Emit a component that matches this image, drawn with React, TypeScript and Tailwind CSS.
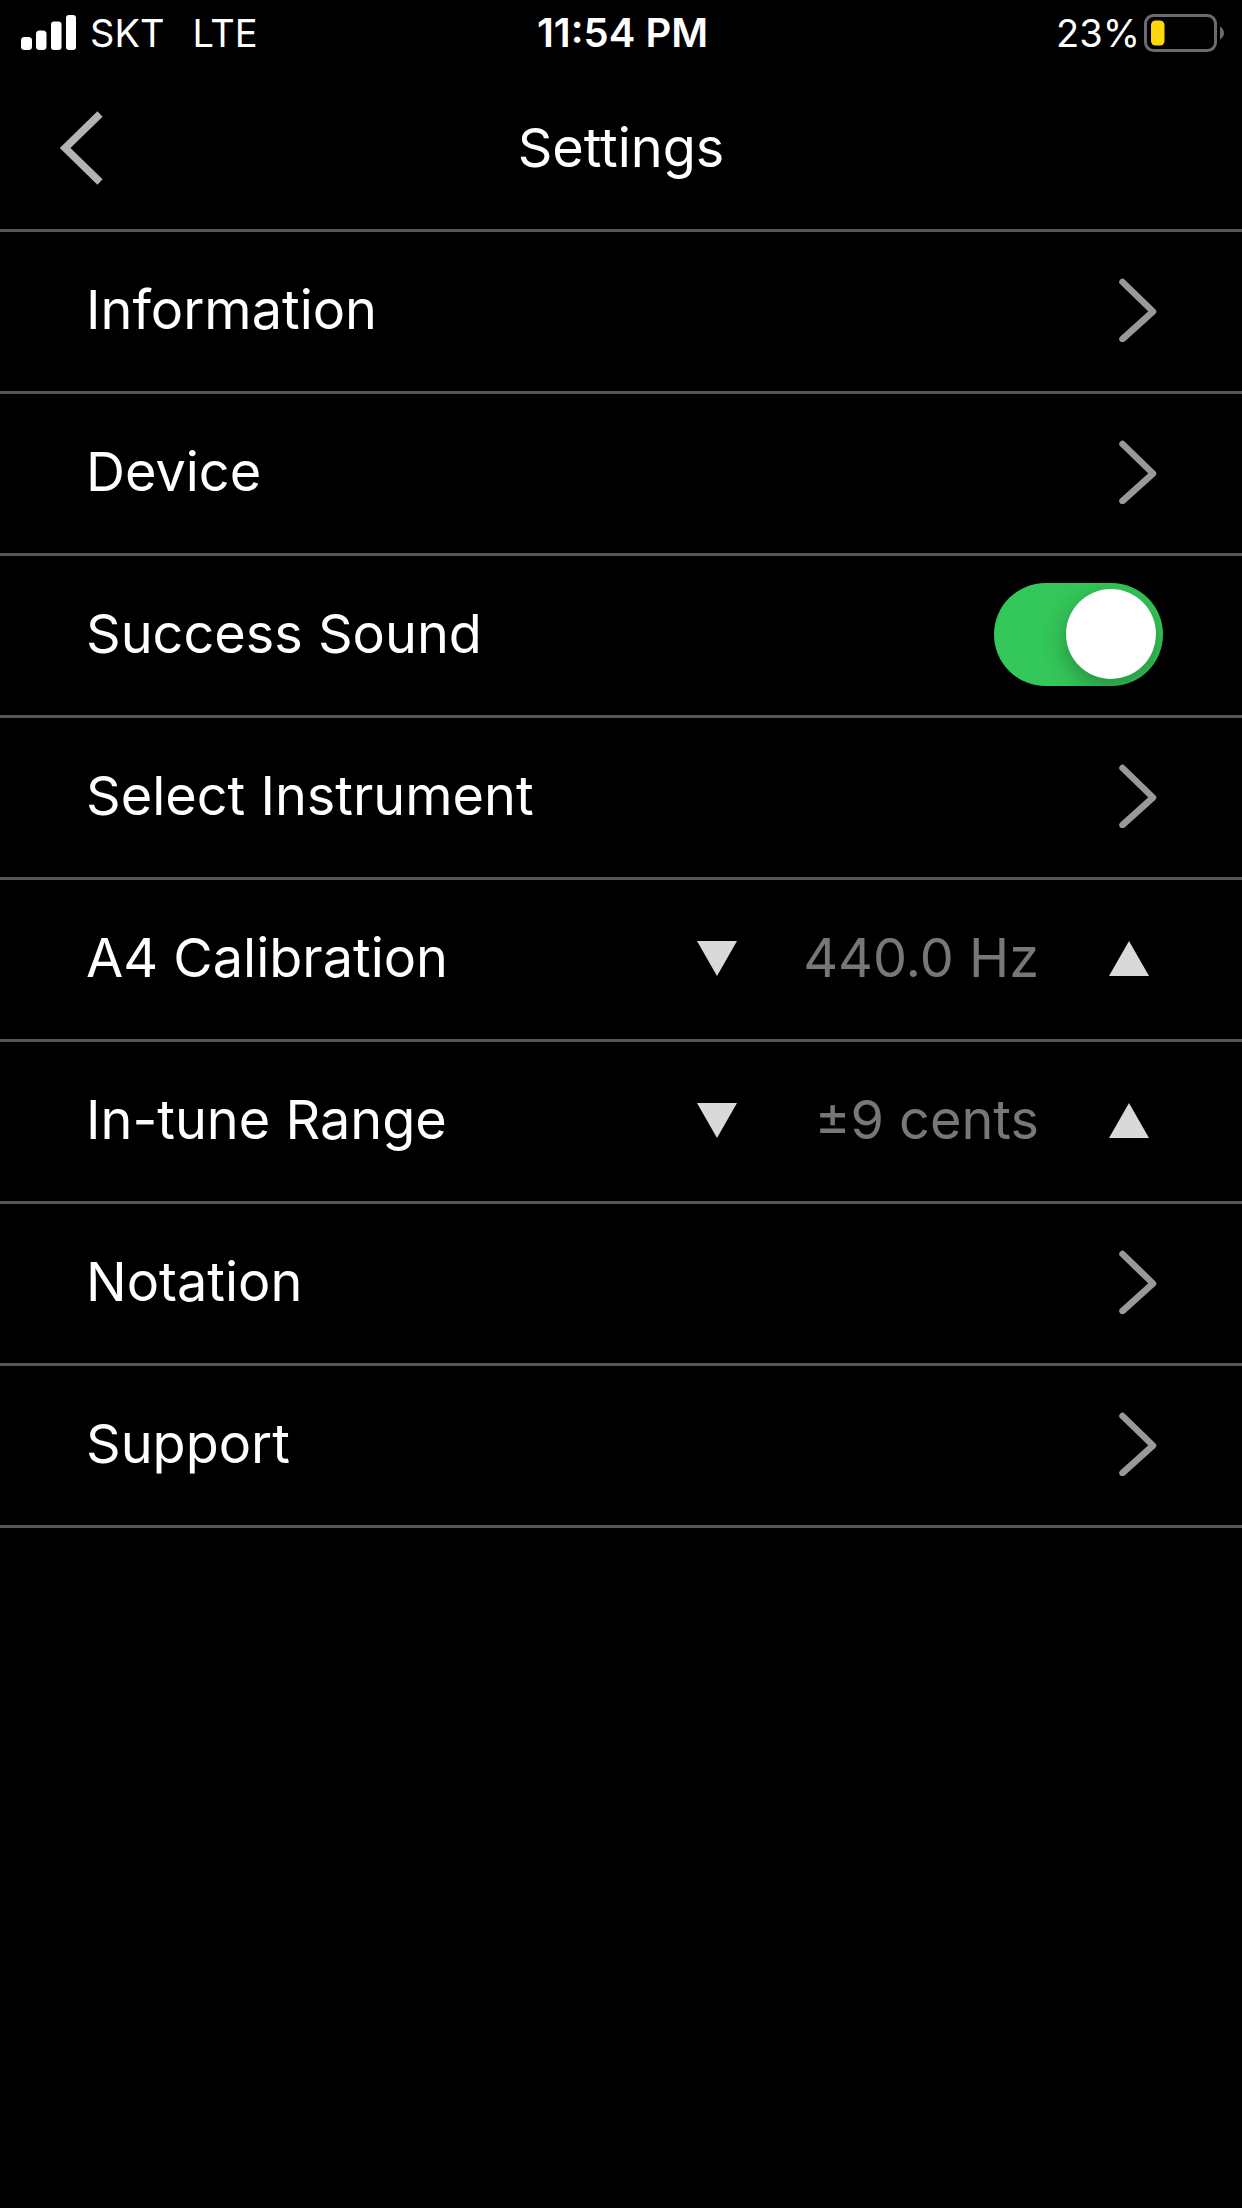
import { useState } from 'react'
import type { ReactNode } from 'react'
import clsx from 'clsx'

const SignalIcon = () => (
  <svg width="55" height="36" viewBox="0 0 55 36" fill="#fff" aria-hidden="true">
    <rect x="0" y="22" width="11" height="13" rx="3.5" />
    <rect x="15" y="15.5" width="10.5" height="19.5" rx="3.5" />
    <rect x="30" y="6.5" width="10.5" height="28.5" rx="3" />
    <rect x="45" y="0" width="10" height="35" rx="3" />
  </svg>
)

const BatteryIcon = () => (
  <svg width="80" height="38" viewBox="0 0 80 38" fill="none" aria-hidden="true">
    <rect x="1.5" y="1.5" width="70" height="35" rx="8" stroke="#6b6b6d" strokeWidth="3" />
    <path d="M76 12.5c2.4 1.3 4 3.7 4 6.5s-1.6 5.2-4 6.5z" fill="#6b6b6d" />
    <rect x="7" y="6.5" width="13.5" height="25" rx="4.5" fill="#ffd60a" />
  </svg>
)

const BackIcon = () => (
  <svg width="43" height="74" viewBox="0 0 43 74" fill="none" aria-hidden="true">
    <path d="M40 3 5 37l35 34" stroke="#b3b3b3" strokeWidth="7.5" />
  </svg>
)

const ChevronIcon = () => (
  <svg width="38" height="64" viewBox="0 0 38 64" fill="none" aria-hidden="true">
    <path
      d="M3.5 4 34 33.5 3.5 61"
      stroke="#999"
      strokeWidth="6.5"
      strokeLinecap="round"
      strokeLinejoin="round"
    />
  </svg>
)

const TriangleIcon = ({ down }: { down?: boolean }) => (
  <svg
    width="40"
    height="35"
    viewBox="0 0 40 35"
    className={clsx(down && 'rotate-180')}
    aria-hidden="true"
  >
    <path d="M20 0 40 35H0z" fill="#d9d9d9" />
  </svg>
)

const StatusBar = () => (
  <div className="grid h-[66px] grid-cols-[1fr_auto_1fr] items-center pr-[18px] pl-[21px] text-[38px] leading-none">
    <div className="flex items-center gap-3.5">
      <SignalIcon />
      <span>SKT</span>
      <span className="pl-3.5">LTE</span>
    </div>
    <span className="text-[40px] font-semibold">11:54 PM</span>
    <div className="flex items-center justify-end gap-1">
      <span>23%</span>
      <BatteryIcon />
    </div>
  </div>
)

const Row = ({ children }: { children: ReactNode }) => (
  <li className="h-[162px] border-b-[3px] border-[#555] pb-[3px]">{children}</li>
)

const LinkRow = ({ label }: { label: string }) => (
  <Row>
    <button
      type="button"
      className="flex h-full w-full cursor-pointer items-center justify-between pr-[85px] pl-[86px] text-left"
    >
      <span>{label}</span>
      <ChevronIcon />
    </button>
  </Row>
)

const SwitchRow = ({ label }: { label: string }) => {
  const [checked, setChecked] = useState(true)

  return (
    <Row>
      <label className="flex h-full cursor-pointer items-center justify-between pr-[79px] pl-[86px]">
        <span>{label}</span>
        <input
          type="checkbox"
          role="switch"
          checked={checked}
          onChange={(e) => setChecked(e.target.checked)}
          className={clsx(
            'flex h-[103px] w-[169px] cursor-pointer appearance-none items-center overflow-hidden rounded-full bg-[#39393d] p-[7px]',
            'before:size-[90px] before:rounded-full before:bg-white before:shadow-[0_8px_24px_rgba(0,0,0,0.3)]',
            'checked:justify-end checked:bg-[#34c759]',
          )}
        />
      </label>
    </Row>
  )
}

type StepperRowProps = {
  label: string
  initial: number
  step: number
  format: (value: number) => string
}

const StepperRow = ({ label, initial, step, format }: StepperRowProps) => {
  const [value, setValue] = useState(initial)

  return (
    <Row>
      <div className="flex h-full items-center justify-between pr-[93px] pl-[86px]">
        <span>{label}</span>
        <div className="flex items-center">
          <button
            type="button"
            aria-label={`Decrease ${label}`}
            className="cursor-pointer"
            onClick={() => setValue(value - step)}
          >
            <TriangleIcon down />
          </button>
          <output className="w-[302px] text-right text-[#777]">
            {format(value)}
          </output>
          <button
            type="button"
            aria-label={`Increase ${label}`}
            className="cursor-pointer pl-[70px]"
            onClick={() => setValue(value + step)}
          >
            <TriangleIcon />
          </button>
        </div>
      </div>
    </Row>
  )
}

const App = () => {
  return (
    <div className="min-h-screen bg-black font-['Inter',sans-serif] text-[54px] leading-none text-white">
      <StatusBar />
      <header className="grid h-[166px] grid-cols-[1fr_auto_1fr] items-center border-b-[3px] border-[#555] px-[60px]">
        <button
          type="button"
          aria-label="Back"
          className="cursor-pointer justify-self-start"
        >
          <BackIcon />
        </button>
        <h1>Settings</h1>
      </header>
      <ul>
        <LinkRow label="Information" />
        <LinkRow label="Device" />
        <SwitchRow label="Success Sound" />
        <LinkRow label="Select Instrument" />
        <StepperRow
          label="A4 Calibration"
          initial={440}
          step={0.5}
          format={(value) => `${value.toFixed(1)} Hz`}
        />
        <StepperRow
          label="In-tune Range"
          initial={9}
          step={1}
          format={(value) => `±${value} cents`}
        />
        <LinkRow label="Notation" />
        <LinkRow label="Support" />
      </ul>
    </div>
  )
}

export default App
